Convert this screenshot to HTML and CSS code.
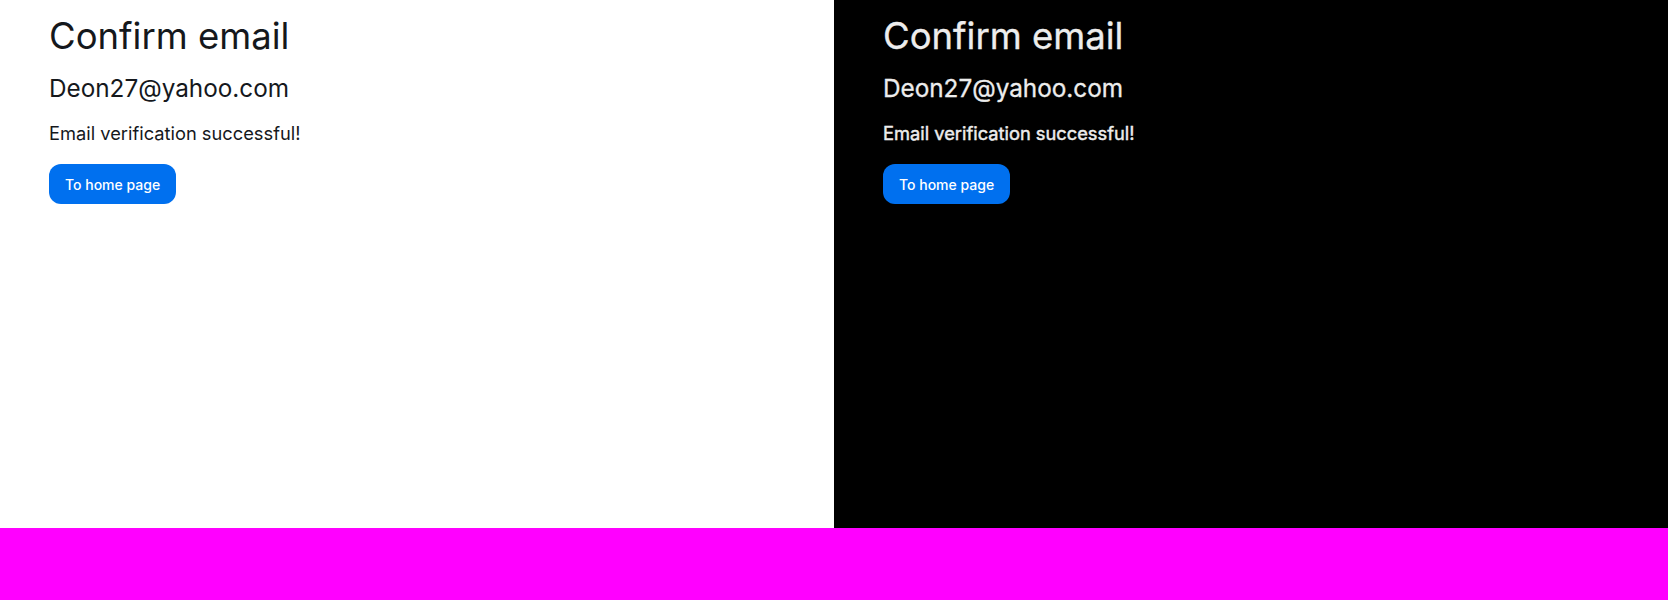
FILE: index.html
```html
<!DOCTYPE html>
<html lang="en">
<head>
<meta charset="utf-8">
<title>Confirm email</title>
<link rel="stylesheet" href="styles.css">
</head>
<body>
<div class="stage">
  <section class="panel light">
    <h1 class="title">Confirm email</h1>
    <p class="email">Deon27@yahoo.com</p>
    <p class="status">Email verification successful!</p>
    <button class="btn" type="button">To home page</button>
  </section>
  <section class="panel dark">
    <h1 class="title">Confirm email</h1>
    <p class="email">Deon27@yahoo.com</p>
    <p class="status">Email verification successful!</p>
    <button class="btn" type="button">To home page</button>
  </section>
</div>
</body>
</html>
```
FILE: styles.css
```css
html, body {
  margin: 0;
  padding: 0;
  background: #ff00ff;
}
body {
  font-family: Inter, "Noto Sans", sans-serif;
}
.stage {
  display: flex;
  height: 528px;
}
.panel {
  width: 834px;
  box-sizing: border-box;
  padding: 12px 49px 0;
  display: flex;
  flex-direction: column;
  align-items: flex-start;
}
.light {
  background: #ffffff;
  color: #15181c;
}
.dark {
  background: #000000;
  color: #ededed;
}
.dark .title,
.dark .email {
  -webkit-text-stroke: 0.3px currentColor;
}
.dark .status {
  -webkit-text-stroke: 0.45px currentColor;
}
.title {
  margin: 0;
  font-size: 36.5px;
  line-height: 48px;
  font-weight: 400;
}
.email {
  margin: 12px 0 0;
  font-size: 24.3px;
  line-height: 32px;
  font-weight: 400;
}
.status {
  margin: 17px 0 0;
  font-size: 18.3px;
  line-height: 24px;
  font-weight: 400;
}
.btn {
  margin-top: 19px;
  height: 40px;
  padding: 0 16px;
  border: none;
  border-radius: 12px;
  background: #0070ef;
  color: #ffffff;
  font-family: Inter, "Noto Sans", sans-serif;
  font-size: 14px;
  font-weight: 500;
}
```
